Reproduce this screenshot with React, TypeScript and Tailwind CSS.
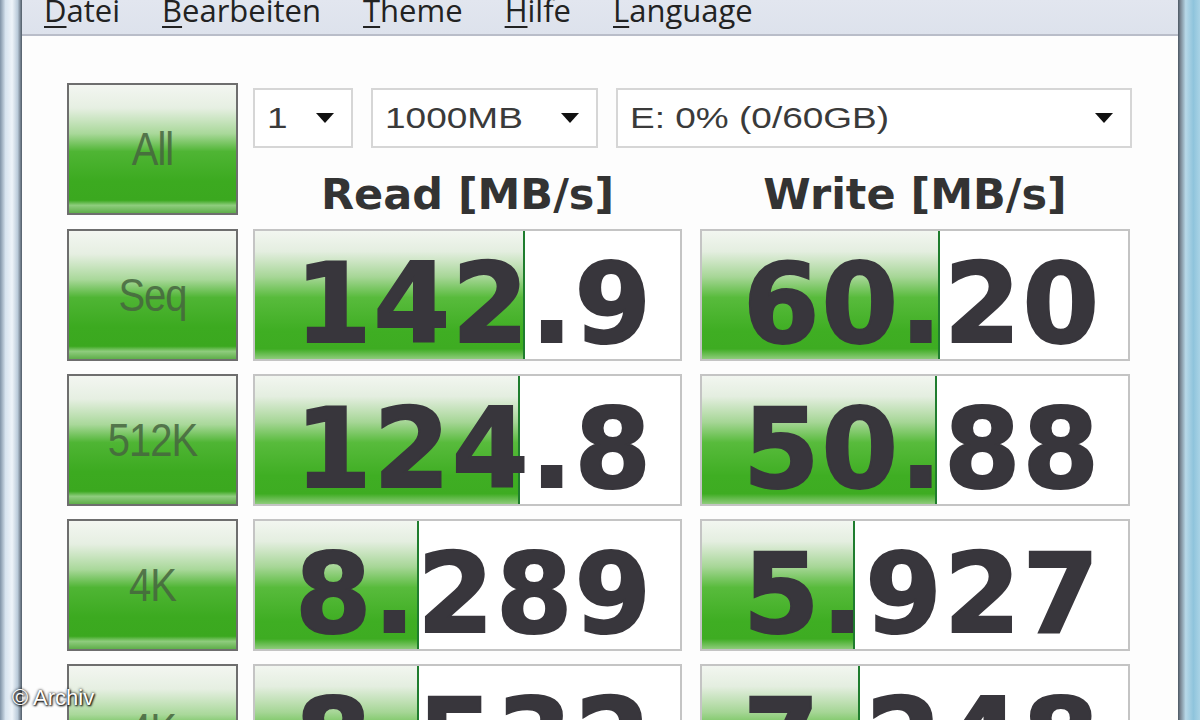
import React from 'react'

const menu = ['Datei', 'Bearbeiten', 'Theme', 'Hilfe', 'Language']

const rows = [
  { label: 'Seq', read: '142.9', readBar: 270, write: '60.20', writeBar: 238 },
  { label: '512K', read: '124.8', readBar: 265, write: '50.88', writeBar: 235 },
  { label: '4K', read: '8.289', readBar: 164, write: '5.927', writeBar: 153 },
  { label: '4K', read: '8.532', readBar: 164, write: '7.248', writeBar: 158 },
]

function GreenButton({ label }: { label: string }) {
  return (
    <div className="w-[171px] h-[132px] shrink-0 border-2 border-[#6e6e6e] bg-[linear-gradient(to_bottom,#f3f6f1_0%,#e6efe2_18%,#a9d89a_38%,#4fb534_52%,#3caa20_75%,#3ba81f_90%,#8fcd7e_94%,#5fae4a_100%)] flex items-center justify-center">
      <span className="font-['Liberation_Sans',sans-serif] text-[40px] leading-none text-[#46653f] opacity-85 scale-y-[1.15] inline-block tracking-tight">
        {label}
      </span>
    </div>
  )
}

function ValueCell({ value, bar, width }: { value: string; bar: number; width: number }) {
  return (
    <div
      className="relative h-[132px] shrink-0 border-2 border-[#c4c4c4] bg-white overflow-hidden"
      style={{ width }}
    >
      <div
        className="absolute left-0 top-0 bottom-0 border-r-2 border-[#1f7d2e] bg-[linear-gradient(to_bottom,#f2f6f0_0%,#e4eee0_16%,#a6d696_36%,#58bb3c_52%,#3fae23_78%,#3eac22_92%,#8fcc7c_100%)]"
        style={{ width: bar }}
      />
      <div className="relative h-full flex items-center justify-end pr-[27px] pt-[18px]">
        <span className="font-['DejaVu_Sans',sans-serif] font-bold text-[110px] leading-none text-[#38363c] tracking-[2px] [-webkit-text-stroke:2px_#38363c]">
          {value}
        </span>
      </div>
    </div>
  )
}

function Dropdown({ text, width }: { text: string; width: number }) {
  return (
    <div
      className="h-[60px] shrink-0 border-2 border-[#d6d6d6] bg-white flex items-center justify-between pl-3 pr-4"
      style={{ width }}
    >
      <span className="font-['Liberation_Sans',sans-serif] text-[37px] leading-none text-[#3a3a3a] inline-block scale-y-[0.78] origin-left">
        {text}
      </span>
      <svg width="20" height="12" viewBox="0 0 20 12" className="shrink-0">
        <path d="M1 1 L19 1 L10 11 Z" fill="#111" />
      </svg>
    </div>
  )
}

export default function App() {
  return (
    <div className="relative w-[1200px] h-[720px] overflow-hidden flex bg-white">
      {/* left window frame */}
      <div className="w-[22px] h-full shrink-0 bg-[linear-gradient(to_right,#7f93a6_0%,#d7e4ef_25%,#eef4f9_55%,#b9cad9_80%,#4f5a66_100%)]" />

      <div className="flex-1 flex flex-col min-w-0">
        {/* menu bar */}
        <div className="h-[36px] shrink-0 bg-[linear-gradient(to_bottom,#e2e6ef,#dde2ec)] border-b-2 border-[#b9bdc9] flex items-start pl-[22px] gap-[42px] overflow-hidden">
          {menu.map((m) => (
            <span
              key={m}
              className="font-['Open_Sans',sans-serif] text-[31px] leading-none text-[#222] mt-[-5px]"
            >
              <span className="underline underline-offset-[4px] decoration-2">{m[0]}</span>
              {m.slice(1)}
            </span>
          ))}
        </div>

        {/* content */}
        <div className="flex-1 bg-[#fdfdfd] pl-[45px] pt-[47px] flex flex-col gap-[13px]">
          <div className="flex gap-[15px]">
            <GreenButton label="All" />
            <div className="flex flex-col pt-[5px]">
              <div className="flex gap-[18px]">
                <Dropdown text="1" width={100} />
                <Dropdown text="1000MB" width={227} />
                <Dropdown text="E: 0% (0/60GB)" width={516} />
              </div>
              <div className="flex gap-[18px] mt-[25px]">
                <div className="w-[429px] text-center font-['DejaVu_Sans',sans-serif] font-bold text-[43px] leading-none text-[#333]">
                  Read [MB/s]
                </div>
                <div className="w-[430px] text-center font-['DejaVu_Sans',sans-serif] font-bold text-[43px] leading-none text-[#333]">
                  Write [MB/s]
                </div>
              </div>
            </div>
          </div>

          {rows.map((r, i) => (
            <div key={i} className="flex gap-[15px]">
              <GreenButton label={r.label} />
              <div className="flex gap-[18px]">
                <ValueCell value={r.read} bar={r.readBar} width={429} />
                <ValueCell value={r.write} bar={r.writeBar} width={430} />
              </div>
            </div>
          ))}
        </div>
      </div>

      {/* right window frame */}
      <div className="w-[22px] h-full shrink-0 bg-[linear-gradient(to_right,#4c5763_0%,#7b8996_12%,#b7d8e8_35%,#8fc4dc_70%,#a9d3e6_100%)]" />

      {/* watermark */}
      <div className="absolute left-[12px] bottom-[11px] font-['Liberation_Sans',sans-serif] text-[22px] leading-none text-white [text-shadow:0_0_3px_#000,1px_1px_2px_#000]">
        © Archiv
      </div>
    </div>
  )
}
